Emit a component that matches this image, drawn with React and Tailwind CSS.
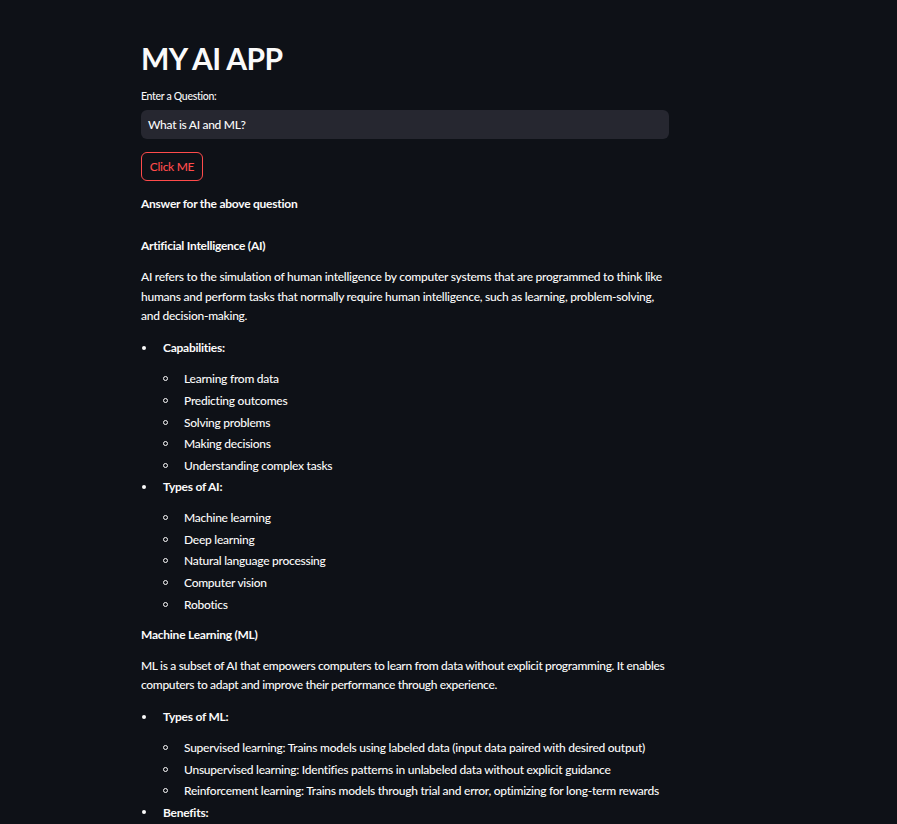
import React from "react";

const font = { fontFamily: "Lato, 'Noto Sans', sans-serif" };

function Line({ children, className = "" }) {
  return <div className={`h-[19.2px] leading-[19.2px] whitespace-nowrap ${className}`}>{children}</div>;
}

function Outer({ children, className = "" }) {
  return (
    <div className={`flex items-center h-[19.2px] ${className}`}>
      <span className="w-[22px] shrink-0 flex items-center">
        <span className="ml-[1px] w-[4px] h-[4px] rounded-full bg-[#fafafa]" />
      </span>
      <span className="font-bold leading-[19.2px]">{children}</span>
    </div>
  );
}

function Sub({ items, className = "" }) {
  return (
    <div className={`flex flex-col gap-[2.4px] ${className}`}>
      {items.map((t) => (
        <div key={t} className="flex items-center h-[19.2px] pl-[21px]">
          <span className="w-[22px] shrink-0 flex items-center">
            <span className="w-[5px] h-[5px] rounded-full border border-[#fafafa] ml-[0.5px]" />
          </span>
          <span className="leading-[19.2px] whitespace-nowrap">{t}</span>
        </div>
      ))}
    </div>
  );
}

export default function App() {
  return (
    <div className="min-h-[824px] h-[824px] overflow-hidden bg-[#0e1117] text-[#fafafa]" style={font}>
      <div className="ml-[141px] w-[528px] pt-[38px] text-[12px] font-medium tracking-[-0.25px]">
        <div className="h-[40px] leading-[40px] text-[30px] font-bold tracking-[-0.6px]">MY AI APP</div>
        <div className="mt-[10px] h-[16px] leading-[16px] text-[10.5px] tracking-[-0.3px]">Enter a Question:</div>
        <div className="mt-[6px] h-[29px] rounded-[6px] bg-[#262730] flex items-center pl-[7px] text-[12px] tracking-[-0.3px]">
          What is AI and ML?
        </div>
        <div className="mt-[13px] flex">
          <button className="h-[29px] w-[62px] rounded-[6px] border border-[#ff4b4b] text-[#ff4b4b] text-[12px] leading-none tracking-[-0.3px]">
            Click ME
          </button>
        </div>
        <Line className="mt-[13.4px] font-bold tracking-[-0.25px]">Answer for the above question</Line>
        <Line className="mt-[22.8px] font-bold tracking-[-0.25px]">Artificial Intelligence (AI)</Line>
        <div className="mt-[11.8px] leading-[19.2px]">
          AI refers to the simulation of human intelligence by computer systems that are programmed to think like humans and perform tasks that normally require human intelligence, such as learning, problem-solving, and decision-making.
        </div>
        <Outer className="mt-[13.4px]">Capabilities:</Outer>
        <Sub
          className="mt-[11.8px]"
          items={["Learning from data", "Predicting outcomes", "Solving problems", "Making decisions", "Understanding complex tasks"]}
        />
        <Outer className="mt-[2.4px]">Types of AI:</Outer>
        <Sub
          className="mt-[11.8px]"
          items={["Machine learning", "Deep learning", "Natural language processing", "Computer vision", "Robotics"]}
        />
        <Line className="mt-[11.4px] font-bold tracking-[-0.25px]">Machine Learning (ML)</Line>
        <div className="mt-[11.8px] leading-[19.2px] tracking-[-0.32px]">
          ML is a subset of AI that empowers computers to learn from data without explicit programming. It enables computers to adapt and improve their performance through experience.
        </div>
        <Outer className="mt-[12.6px]">Types of ML:</Outer>
        <Sub
          className="mt-[11.8px]"
          items={[
            "Supervised learning: Trains models using labeled data (input data paired with desired output)",
            "Unsupervised learning: Identifies patterns in unlabeled data without explicit guidance",
            "Reinforcement learning: Trains models through trial and error, optimizing for long-term rewards",
          ]}
        />
        <Outer className="mt-[2.4px]">Benefits:</Outer>
      </div>
    </div>
  );
}
